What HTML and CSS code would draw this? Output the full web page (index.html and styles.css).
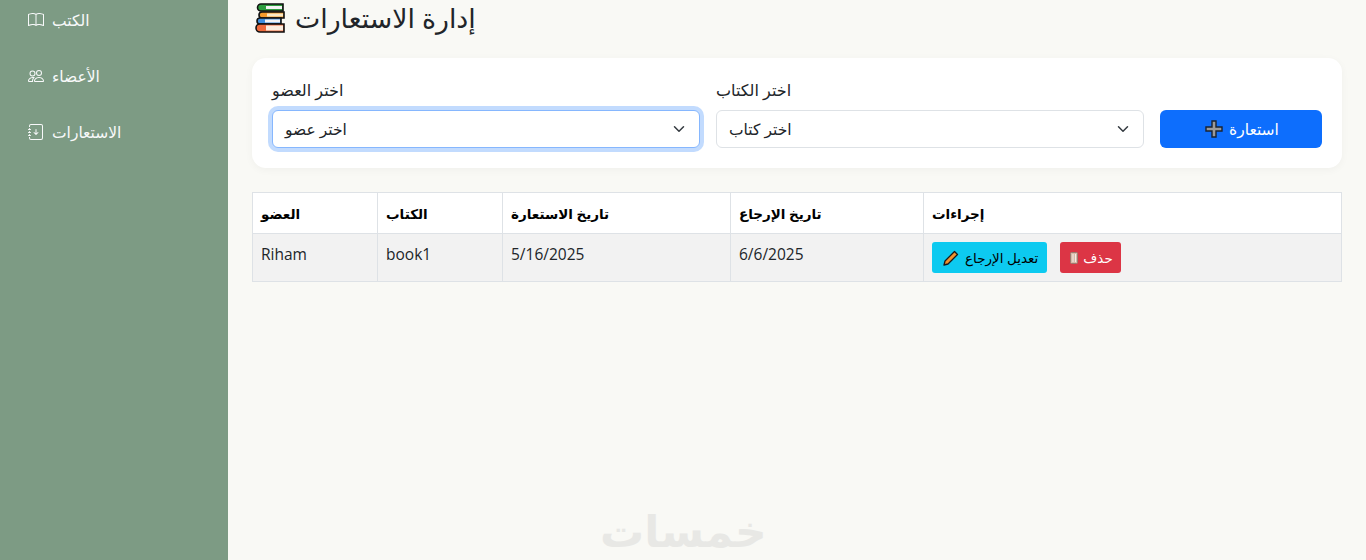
FILE: index.html
```html
<!DOCTYPE html>
<html lang="ar">
<head>
  <meta charset="UTF-8">
  <meta name="viewport" content="width=device-width, initial-scale=1.0">
  <title>إدارة الاستعارات</title>
  <link rel="stylesheet" href="styles.css">
</head>
<body>
  <div class="layout">
    <aside class="sidebar">
      <a class="side-link" href="#">
        <svg class="side-icon" viewBox="0 0 16 16" fill="currentColor"><path d="M1 2.83c.885-.37 2.154-.769 3.388-.893 1.33-.134 2.458.063 3.112.752v9.746c-.935-.53-2.12-.603-3.213-.493-1.18.12-2.37.461-3.287.811zm7.5-.141c.654-.689 1.782-.886 3.112-.752 1.234.124 2.503.523 3.388.893v9.923c-.918-.35-2.107-.692-3.287-.81-1.094-.111-2.278-.039-3.213.492zM8 1.783C7.015.936 5.587.81 4.287.94c-1.514.153-3.042.672-3.994 1.105A.5.5 0 0 0 0 2.5v11a.5.5 0 0 0 .707.455c.882-.4 2.303-.881 3.68-1.02 1.409-.142 2.59.087 3.223.877a.5.5 0 0 0 .78 0c.633-.79 1.814-1.019 3.222-.877 1.378.139 2.8.62 3.681 1.02A.5.5 0 0 0 16 13.5v-11a.5.5 0 0 0-.293-.455c-.952-.433-2.48-.952-3.994-1.105C10.413.809 8.985.936 8 1.783"/></svg>
        <span>الكتب</span>
      </a>
      <a class="side-link" href="#">
        <svg class="side-icon" viewBox="0 0 16 16" fill="currentColor"><path d="M15 14s1 0 1-1-1-4-5-4-5 3-5 4 1 1 1 1zm-7.978-1L7 12.996c.001-.264.167-1.03.76-1.72C8.312 10.629 9.282 10 11 10c1.717 0 2.687.63 3.24 1.276.593.69.758 1.457.76 1.72l-.008.002-.014.002zM11 7a2 2 0 1 0 0-4 2 2 0 0 0 0 4m3-2a3 3 0 1 1-6 0 3 3 0 0 1 6 0M6.936 9.28a6 6 0 0 0-1.23-.247A7 7 0 0 0 5 9c-4 0-5 3-5 4q0 1 1 1h4.216A2.24 2.24 0 0 1 5 13c0-1.01.377-2.042 1.09-2.904.243-.294.526-.569.846-.816M4.92 10A5.5 5.5 0 0 0 4 13H1c0-.26.164-1.03.76-1.724.545-.636 1.492-1.256 3.16-1.275ZM1.5 5.5a3 3 0 1 1 6 0 3 3 0 0 1-6 0m3-2a2 2 0 1 0 0 4 2 2 0 0 0 0-4"/></svg>
        <span>الأعضاء</span>
      </a>
      <a class="side-link" href="#">
        <svg class="side-icon" viewBox="0 0 16 16" fill="currentColor"><path fill-rule="evenodd" d="M8 5a.5.5 0 0 1 .5.5v3.793l1.146-1.147a.5.5 0 0 1 .708.708l-2 2a.5.5 0 0 1-.708 0l-2-2a.5.5 0 1 1 .708-.708L7.5 9.293V5.5A.5.5 0 0 1 8 5"/><path d="M3 0h10a2 2 0 0 1 2 2v12a2 2 0 0 1-2 2H3a2 2 0 0 1-2-2v-1h1v1a1 1 0 0 0 1 1h10a1 1 0 0 0 1-1V2a1 1 0 0 0-1-1H3a1 1 0 0 0-1 1v1H1V2a2 2 0 0 1 2-2"/><path d="M1 5v-.5a.5.5 0 0 1 1 0V5h.5a.5.5 0 0 1 0 1h-2a.5.5 0 0 1 0-1zm0 3v-.5a.5.5 0 0 1 1 0V8h.5a.5.5 0 0 1 0 1h-2a.5.5 0 0 1 0-1zm0 3v-.5a.5.5 0 0 1 1 0v.5h.5a.5.5 0 0 1 0 1h-2a.5.5 0 0 1 0-1z"/></svg>
        <span>الاستعارات</span>
      </a>
    </aside>

    <main class="content">
      <h1 class="page-title">
        <svg class="title-icon" viewBox="0 0 30 30">
          <path d="M6 1h22v7H6a3.5 3.5 0 0 1 0-7z" fill="#2e9e3f" stroke="#111" stroke-width="1.6"/>
          <rect x="11" y="3" width="16" height="3" fill="#f4f4f4"/>
          <path d="M7 9h22v6H7a3 3 0 0 1 0-6z" fill="#f39a2d" stroke="#111" stroke-width="1.6"/>
          <rect x="12" y="10.5" width="16" height="3" fill="#f8e9c8"/>
          <path d="M5 15h21v6H5a3 3 0 0 1 0-6z" fill="#3d8fe0" stroke="#111" stroke-width="1.6"/>
          <rect x="10" y="16.5" width="15" height="3" fill="#f4f4f4"/>
          <path d="M5 21h24v8H5a4 4 0 0 1 0-8z" fill="#ee6b3d" stroke="#111" stroke-width="1.6"/>
          <rect x="11" y="22.5" width="17" height="5" fill="#fbeee0"/>
        </svg>
        <span>إدارة الاستعارات</span>
      </h1>

      <form class="loan-form">
        <div class="field">
          <label for="member">اختر العضو</label>
          <div class="select-box is-focused" id="member">
            <span>اختر عضو</span>
            <svg class="chevron" viewBox="0 0 16 16"><path d="m2 5 6 6 6-6" fill="none" stroke="#343a40" stroke-width="2" stroke-linecap="round" stroke-linejoin="round"/></svg>
          </div>
        </div>
        <div class="field">
          <label for="book">اختر الكتاب</label>
          <div class="select-box" id="book">
            <span>اختر كتاب</span>
            <svg class="chevron" viewBox="0 0 16 16"><path d="m2 5 6 6 6-6" fill="none" stroke="#343a40" stroke-width="2" stroke-linecap="round" stroke-linejoin="round"/></svg>
          </div>
        </div>
        <button type="button" class="btn btn-primary">
          <svg class="plus-icon" viewBox="0 0 18 18"><path d="M7 1h4v6h6v4h-6v6H7v-6H1V7h6z" fill="#9a9a9a" stroke="#1a2330" stroke-width="1.4"/></svg>
          <span>استعارة</span>
        </button>
      </form>

      <table class="loans">
        <thead>
          <tr>
            <th class="col-member">العضو</th>
            <th class="col-book">الكتاب</th>
            <th class="col-date">تاريخ الاستعارة</th>
            <th class="col-return">تاريخ الإرجاع</th>
            <th>إجراءات</th>
          </tr>
        </thead>
        <tbody>
          <tr>
            <td>Riham</td>
            <td>book1</td>
            <td>5/16/2025</td>
            <td>6/6/2025</td>
            <td>
              <div class="actions">
                <button type="button" class="btn-sm btn-info">
                  <svg class="sm-icon" viewBox="0 0 16 16"><path d="M11.5 1.5 14.5 4.5 5 14 1 15 2 11z" fill="#f0922e" stroke="#1a1a1a" stroke-width="1.3" stroke-linejoin="round"/></svg>
                  <span>تعديل الإرجاع</span>
                </button>
                <button type="button" class="btn-sm btn-danger">
                  <svg class="trash-icon" viewBox="0 0 8 12"><rect x="0.5" y="0.5" width="7" height="11" rx="1" fill="#d9b8a8" stroke="#9c7a70"/><path d="M3 2v8M5.5 2v8" stroke="#f4ece6"/></svg>
                  <span>حذف</span>
                </button>
              </div>
            </td>
          </tr>
        </tbody>
      </table>

      <div class="watermark">خمسات</div>
    </main>
  </div>
</body>
</html>
```

FILE: styles.css
```css
* {
  box-sizing: border-box;
}

body {
  margin: 0;
  height: 560px;
  overflow: hidden;
  font-family: "Open Sans", "DejaVu Sans", sans-serif;
  font-size: 15px;
  color: #212529;
  background: #f9f9f5;
}

.layout {
  display: flex;
  height: 560px;
}

.sidebar {
  width: 228px;
  flex-shrink: 0;
  background: #7d9b84;
  padding-top: 5px;
  display: flex;
  flex-direction: column;
  gap: 26px;
}

.side-link {
  display: flex;
  align-items: center;
  gap: 8px;
  height: 30px;
  padding-left: 28px;
  color: #f8f9fa;
  text-decoration: none;
  font-size: 15.5px;
}

.side-icon {
  width: 16px;
  height: 16px;
}

.content {
  flex: 1;
  padding: 0 24px;
  position: relative;
}

.page-title {
  display: flex;
  align-items: center;
  gap: 10px;
  margin: 0 0 35px;
  height: 23px;
  padding-top: 12px;
  padding-left: 3px;
  font-size: 26.8px;
  font-weight: 500;
}

.title-icon {
  width: 30px;
  height: 30px;
  margin-top: 1px;
}

.loan-form {
  display: flex;
  align-items: flex-end;
  gap: 16px;
  padding: 20px;
  height: 110px;
  background: #fff;
  border-radius: 14px;
  box-shadow: 0 2px 8px rgba(0, 0, 0, 0.04);
  margin-bottom: 24px;
}

.field {
  flex: 1;
}

.field label {
  display: block;
  margin-bottom: 8px;
  font-size: 16px;
  line-height: 24px;
}

.select-box {
  display: flex;
  align-items: center;
  justify-content: space-between;
  height: 38px;
  padding: 0 12px;
  background: #fff;
  border: 1px solid #dee2e6;
  border-radius: 6px;
  font-size: 15.5px;
}

.select-box.is-focused {
  border-color: #86b7fe;
  box-shadow: 0 0 0 4px rgba(13, 110, 253, 0.25);
}

.chevron {
  width: 12px;
  height: 12px;
  margin-right: 2px;
}

.btn {
  border: none;
  cursor: pointer;
  font-family: inherit;
}

.btn-primary {
  display: flex;
  align-items: center;
  justify-content: center;
  gap: 6px;
  width: 162px;
  height: 38px;
  padding: 0 0 0 2px;
  background: #0d6efd;
  color: #fff;
  border-radius: 6px;
  font-size: 15.5px;
}

.plus-icon {
  width: 18px;
  height: 18px;
}

.loans {
  width: 100%;
  border-collapse: collapse;
  table-layout: fixed;
  background: #fff;
}

.loans th, .loans td {
  border: 1px solid #dee2e6;
  padding: 8px;
  text-align: left;
  vertical-align: top;
}

.loans th {
  height: 41px;
  padding-top: 9px;
  padding-bottom: 7px;
  font-size: 13.5px;
  font-weight: 700;
  color: #000;
  line-height: 24px;
}

.loans td {
  height: 48px;
  font-size: 15.5px;
  line-height: 24px;
  background: #f2f2f2;
}

.col-member, .col-book {
  width: 125px;
}

.col-date {
  width: 228px;
}

.col-return {
  width: 193px;
}

.actions {
  display: flex;
  align-items: center;
  gap: 13px;
}

.btn-sm {
  display: flex;
  align-items: center;
  height: 31px;
  border: none;
  border-radius: 3px;
  font-family: inherit;
  font-size: 13.5px;
  cursor: pointer;
}

.btn-info {
  gap: 6px;
  padding: 0 9px 0 11px;
  background: #0dcaf0;
  color: #000;
}

.btn-danger {
  gap: 5px;
  padding: 0 8px 0 10px;
  background: #dc3545;
  color: #fff;
}

.sm-icon {
  width: 16px;
  height: 16px;
}

.trash-icon {
  width: 8px;
  height: 12px;
}

.watermark {
  position: absolute;
  left: 372px;
  top: 500px;
  font-size: 44px;
  font-weight: 700;
  color: #e8e8e5;
}
```
